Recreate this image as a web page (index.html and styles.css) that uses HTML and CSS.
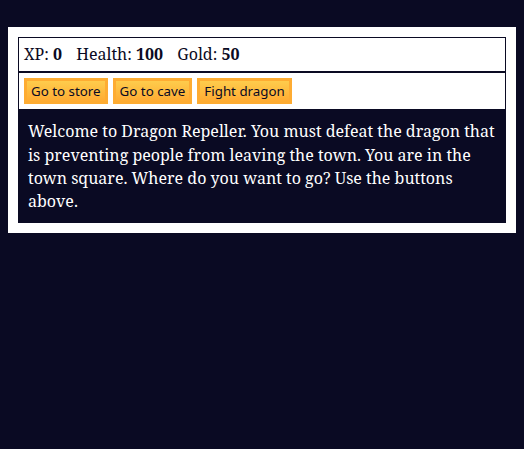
FILE: index.html
```html
<!DOCTYPE html>
<html>
<head>
<meta charset="utf-8">
<link rel="stylesheet" href="styles.css">
</head>
<body>
<div class="game">
  <div class="stats">
    <span class="stat">XP: <strong>0</strong></span>
    <span class="stat">Health: <strong>100</strong></span>
    <span class="stat">Gold: <strong>50</strong></span>
  </div>
  <div class="controls">
    <button class="btn">Go to store</button>
    <button class="btn">Go to cave</button>
    <button class="btn">Fight dragon</button>
  </div>
  <div class="text">Welcome to Dragon Repeller. You must defeat the dragon that is preventing people from leaving the town. You are in the town square. Where do you want to go? Use the buttons above.</div>
</div>
</body>
</html>
```
FILE: styles.css
```css
html {
  background-color: #0a0a23;
}
body {
  background-color: #0a0a23;
  margin: 0;
  padding: 27px 8px 8px;
  font-family: "Noto Serif", "DejaVu Serif", serif;
  font-size: 16px;
  line-height: 23.25px;
}
.game {
  max-width: 500px;
  background-color: #ffffff;
  color: #ffffff;
  margin: 0 auto;
  padding: 10px;
}
.stats, .controls {
  border: 1px solid #0a0a23;
  padding: 5px;
  color: #0a0a23;
}
.controls {
  display: flex;
  gap: 5px;
  align-items: center;
}
.stat {
  padding-right: 10px;
}
.btn {
  font-family: "Noto Sans", "DejaVu Sans", sans-serif;
  font-size: 13.333px;
  line-height: normal;
  color: #0a0a23;
  background-color: #feac32;
  background-image: linear-gradient(#fecc4c, #ffac33);
  border: 3px solid #feac32;
  padding: 1px 4px;
  margin: 0;
}
.text {
  background-color: #0a0a23;
  color: #ffffff;
  padding: 10px;
}
```
